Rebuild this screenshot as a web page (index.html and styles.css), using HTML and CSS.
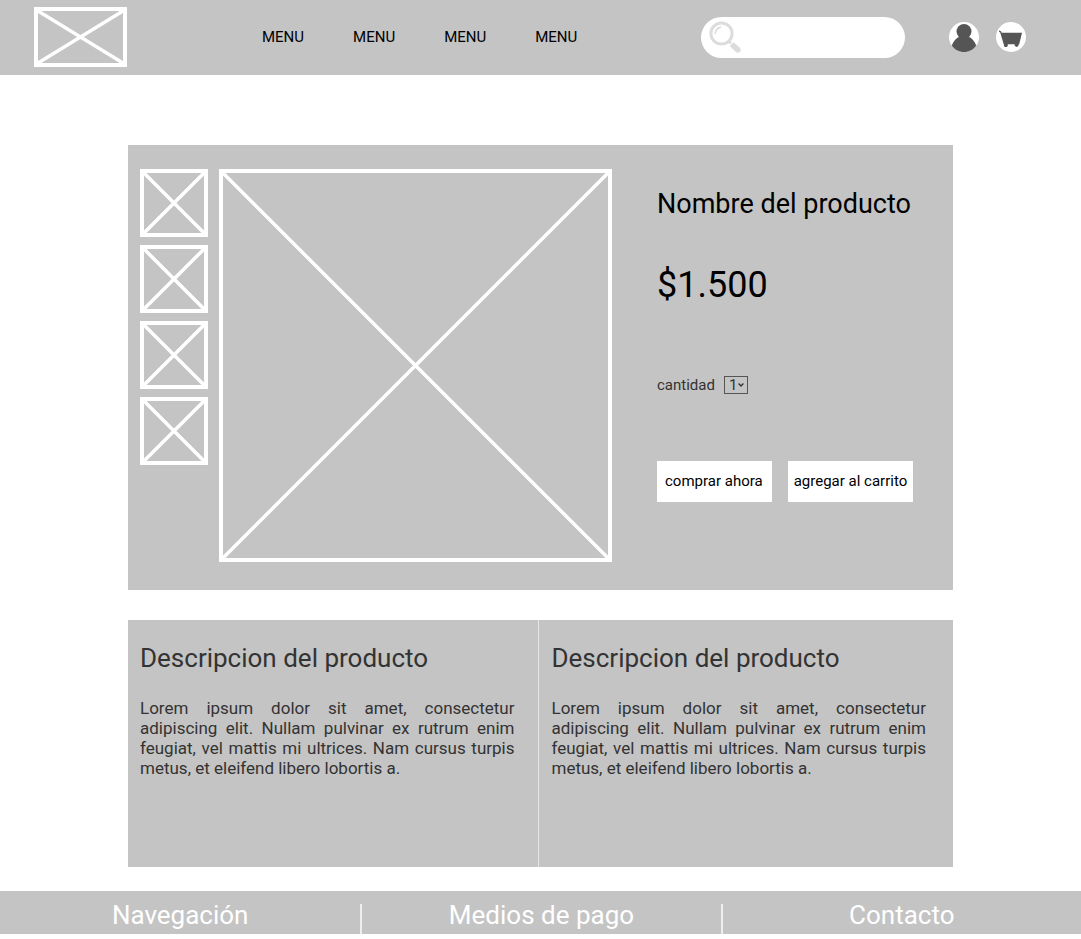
FILE: index.html
```html
<!DOCTYPE html>
<html lang="es">
<head>
<meta charset="utf-8">
<meta name="viewport" content="width=device-width, initial-scale=1">
<title>Nombre del producto</title>
<link rel="stylesheet" href="styles.css">
</head>
<body>
<header class="header">
  <a class="logo" href="#" aria-label="Inicio">
    <svg class="cross" viewBox="0 0 85 52" preserveAspectRatio="none" aria-hidden="true"><path d="M0 0L85 52M85 0L0 52"/></svg>
  </a>
  <nav class="menu">
    <a href="#">MENU</a>
    <a href="#">MENU</a>
    <a href="#">MENU</a>
    <a href="#">MENU</a>
  </nav>
  <form class="search">
    <svg class="search-icon" viewBox="0 0 32 32" aria-hidden="true">
      <circle cx="12.500" cy="12.500" r="10.600" stroke-width="3"/>
      <path d="M6 13Q6.500 7.500 12 6" stroke-width="1.700"/>
      <path d="M19.700 20.200L22 22.500" stroke-width="2.500"/>
      <path d="M22.700 23.200L29 29" stroke-width="5.400"/>
      <path d="M26 26.200L29 29" stroke-width="5.400" stroke-linecap="round"/>
    </svg>
    <input type="search" aria-label="Buscar">
  </form>
  <div class="actions">
    <a href="#" aria-label="Cuenta">
      <svg viewBox="0 0 30 30" aria-hidden="true">
        <circle cx="15" cy="15" r="15" fill="#fff"/>
        <circle cx="15" cy="9.500" r="7.500"/>
        <path d="M2.800 23.500C4.500 19 7 16.200 10.500 14.800H19.500C23 16.200 25.500 19 27.200 23.500C24.500 27.700 20 30 15 30S5.500 27.700 2.800 23.500Z"/>
      </svg>
    </a>
    <a href="#" aria-label="Carrito">
      <svg viewBox="0 0 30 30" aria-hidden="true">
        <circle cx="15" cy="15" r="15" fill="#fff"/>
        <path d="M3 8.500L5 9.200L5.700 10.700H26L23.200 22.300H22.500A2 2 0 1 1 18.700 22.300H11.700A2 2 0 1 1 8 22.300H7.700L4.200 10.500L3 9.800Z"/>
      </svg>
    </a>
  </div>
</header>

<main class="page">
  <section class="product">
    <div class="thumbs">
      <svg class="cross" viewBox="0 0 60 60" role="img" aria-label="Vista 1"><path d="M0 0L60 60M60 0L0 60"/></svg>
      <svg class="cross" viewBox="0 0 60 60" role="img" aria-label="Vista 2"><path d="M0 0L60 60M60 0L0 60"/></svg>
      <svg class="cross" viewBox="0 0 60 60" role="img" aria-label="Vista 3"><path d="M0 0L60 60M60 0L0 60"/></svg>
      <svg class="cross" viewBox="0 0 60 60" role="img" aria-label="Vista 4"><path d="M0 0L60 60M60 0L0 60"/></svg>
    </div>
    <div class="photo">
      <svg class="cross" viewBox="0 0 385 385" role="img" aria-label="Foto del producto"><path d="M0 0L385 385M385 0L0 385"/></svg>
    </div>
    <div class="info">
      <h1 class="name">Nombre del producto</h1>
      <p class="price">$1.500</p>
      <div class="quantity">
        <label for="cantidad">cantidad</label>
        <span class="select">
          <select id="cantidad"><option>1</option><option>2</option><option>3</option></select>
          <svg class="chevron" viewBox="0 0 6 4" aria-hidden="true"><path d="M.6 .6L3 3L5.400 .6" stroke-width="1.400"/></svg>
        </span>
      </div>
      <div class="buttons">
        <button type="button">comprar ahora</button>
        <button type="button">agregar al carrito</button>
      </div>
    </div>
  </section>

  <div class="details">
    <section class="detail">
      <h2>Descripcion del producto</h2>
      <p>Lorem ipsum dolor sit amet, consectetur adipiscing elit. Nullam pulvinar ex rutrum enim feugiat, vel mattis mi ultrices. Nam cursus turpis metus, et eleifend libero lobortis a.</p>
    </section>
    <section class="detail">
      <h2>Descripcion del producto</h2>
      <p>Lorem ipsum dolor sit amet, consectetur adipiscing elit. Nullam pulvinar ex rutrum enim feugiat, vel mattis mi ultrices. Nam cursus turpis metus, et eleifend libero lobortis a.</p>
    </section>
  </div>
</main>

<footer class="footer">
  <a href="#">Navegación</a>
  <a href="#">Medios de pago</a>
  <a href="#">Contacto</a>
</footer>
</body>
</html>
```
FILE: styles.css
```css
* {
  box-sizing: border-box;
}

body {
  margin: 0;
  background: #fff;
  color: #000;
  font-family: Roboto, "Liberation Sans", sans-serif;
  font-size: 15px;
}

h1, h2, p {
  margin: 0;
  font-weight: 400;
}

a {
  color: inherit;
  text-decoration: none;
}

.cross {
  display: block;
  width: 100%;
  border: 4px solid #fff;
  fill: none;
  stroke: #fff;
  stroke-width: 3.5;
}

.header {
  display: flex;
  align-items: center;
  height: 75px;
  padding: 0 55px 1px 34px;
  background: #c4c4c4;
}

.logo {
  width: 93px;
}

.logo .cross {
  height: 60px;
}

.menu {
  display: flex;
  gap: 49px;
  margin-left: 135px;
}

.search {
  display: flex;
  align-items: center;
  width: 204px;
  height: 41px;
  margin-left: auto;
  padding: 0 16px 0 8px;
  border-radius: 21px;
  background: #fff;
}

.search-icon {
  flex: none;
  width: 32px;
  height: 32px;
  fill: none;
  stroke: #dcdcdc;
}

.search input {
  flex: 1;
  min-width: 0;
  padding: 0 4px;
  border: 0;
  outline: 0;
  background: transparent;
  font: inherit;
}

.actions {
  display: flex;
  gap: 17px;
  margin-left: 44px;
}

.actions svg {
  display: block;
  width: 30px;
  height: 30px;
  fill: #555;
}

.page {
  padding: 70px 128px 24px;
}

.product {
  display: flex;
  align-items: flex-start;
  padding: 24px 12px 28px;
  background: #c4c4c4;
}

.thumbs {
  display: grid;
  flex: none;
  gap: 8px;
  width: 68px;
}

.photo {
  flex: 1;
  margin: 0 45px 0 11px;
}

.info {
  flex: none;
  width: 284px;
  padding-top: 18px;
}

.name {
  font-size: 27px;
  line-height: 34px;
}

.price {
  margin-top: 43px;
  font-size: 36px;
  line-height: 42px;
}

.quantity {
  display: flex;
  align-items: center;
  gap: 9px;
  margin-top: 70px;
  color: #333;
}

.select {
  display: flex;
  position: relative;
}

.select select {
  width: 24px;
  height: 18px;
  padding: 0 0 0 4px;
  border: 1px solid #555;
  border-radius: 0;
  appearance: none;
  background: transparent;
  color: inherit;
  font: inherit;
  line-height: 16px;
}

.chevron {
  position: absolute;
  top: 7px;
  right: 4px;
  width: 6px;
  height: 4px;
  fill: none;
  stroke: #333;
  pointer-events: none;
}

.buttons {
  display: flex;
  gap: 16px;
  margin-top: 67px;
}

.buttons button {
  height: 41px;
  padding: 0 6px 2px;
  border: 0;
  background: #fff;
  color: #000;
  font: inherit;
}

.buttons button:first-child {
  padding: 0 9px 2px 8px;
}

.details {
  display: grid;
  grid-template-columns: 410fr 414fr;
  margin-top: 30px;
}

.detail {
  min-height: 247px;
  padding: 22px 24px 24px 12px;
  background: #c4c4c4;
  color: #333;
}

.detail + .detail {
  padding-right: 27px;
  border-left: 1px solid #e6e6e6;
}

.detail h2 {
  font-size: 26px;
  line-height: 32px;
}

.detail p {
  margin-top: 24px;
  font-size: 17px;
  line-height: 20px;
  text-align: justify;
}

.footer {
  display: grid;
  grid-template-columns: repeat(3, 1fr);
  padding-top: 13px;
  background: #c4c4c4;
  color: #fff;
  font-size: 26px;
  line-height: 22px;
  text-align: center;
}

.footer a {
  padding-bottom: 8px;
}

.footer a + a {
  border-left: 2px solid #eee;
}
```
